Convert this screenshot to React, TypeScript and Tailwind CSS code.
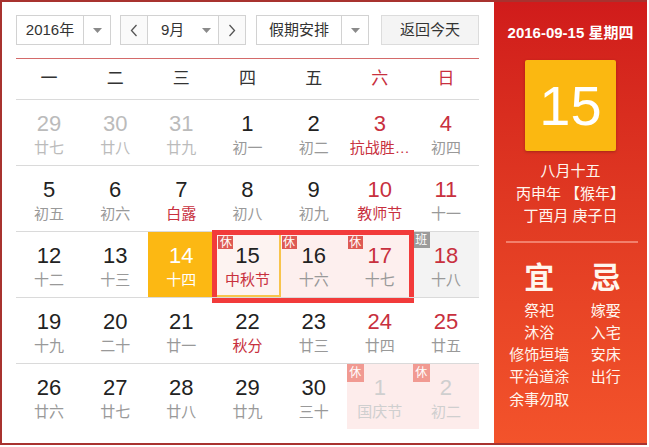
const FONT = { fontFamily: '"Liberation Sans", "Noto Sans CJK SC", sans-serif' };

type Day = {
  n: string;
  l: string;
  nc?: string;
  lc?: string;
  bg?: string;
  badge?: "休" | "班" | "休淡";
  today?: boolean;
};

const BLK = "text-[#222]";
const RED = "text-[#c8303e]";
const GRY = "text-[#999]";
const PALE = "text-[#bbb]";
const FADE = "text-[#cfcfcf]";

const weeks: Day[][] = [
  [
    { n: "29", l: "廿七", nc: PALE, lc: PALE },
    { n: "30", l: "廿八", nc: PALE, lc: PALE },
    { n: "31", l: "廿九", nc: PALE, lc: PALE },
    { n: "1", l: "初一" },
    { n: "2", l: "初二" },
    { n: "3", l: "抗战胜…", nc: RED, lc: RED },
    { n: "4", l: "初四", nc: RED },
  ],
  [
    { n: "5", l: "初五" },
    { n: "6", l: "初六" },
    { n: "7", l: "白露", lc: RED },
    { n: "8", l: "初八" },
    { n: "9", l: "初九" },
    { n: "10", l: "教师节", nc: RED, lc: RED },
    { n: "11", l: "十一", nc: RED },
  ],
  [
    { n: "12", l: "十二" },
    { n: "13", l: "十三" },
    { n: "14", l: "十四", nc: "text-white", lc: "text-white", bg: "bg-[#fcb813]" },
    { n: "15", l: "中秋节", lc: RED, bg: "bg-[#fdf3f1]", badge: "休", today: true },
    { n: "16", l: "十六", bg: "bg-[#fdefee]", badge: "休" },
    { n: "17", l: "十七", nc: RED, bg: "bg-[#fdefee]", badge: "休" },
    { n: "18", l: "十八", nc: RED, bg: "bg-[#f3f3f3]", badge: "班" },
  ],
  [
    { n: "19", l: "十九" },
    { n: "20", l: "二十" },
    { n: "21", l: "廿一" },
    { n: "22", l: "秋分", lc: RED },
    { n: "23", l: "廿三" },
    { n: "24", l: "廿四", nc: RED },
    { n: "25", l: "廿五", nc: RED },
  ],
  [
    { n: "26", l: "廿六" },
    { n: "27", l: "廿七" },
    { n: "28", l: "廿八" },
    { n: "29", l: "廿九" },
    { n: "30", l: "三十" },
    { n: "1", l: "国庆节", nc: FADE, lc: FADE, bg: "bg-[#fdeceb]", badge: "休淡" },
    { n: "2", l: "初二", nc: FADE, lc: FADE, bg: "bg-[#fdeceb]", badge: "休淡" },
  ],
];

function Caret() {
  return (
    <svg width="9" height="5" viewBox="0 0 9 5">
      <path d="M0 0 L9 0 L4.5 5 Z" fill="#8a8a8a" />
    </svg>
  );
}

function Chevron({ dir }: { dir: "l" | "r" }) {
  return (
    <svg width="8" height="13" viewBox="0 0 8 13">
      <polyline
        points={dir === "l" ? "6.5,1 1.5,6.5 6.5,12" : "1.5,1 6.5,6.5 1.5,12"}
        fill="none"
        stroke="#555"
        strokeWidth="1.3"
      />
    </svg>
  );
}

function Cell({ d }: { d: Day }) {
  const badgeCls =
    d.badge === "班"
      ? "bg-[#9b9b9b] left-0 top-0 w-[17px] h-[16px]"
      : d.badge === "休淡"
        ? "bg-[#f19a92] left-0 top-0 w-[17px] h-[18px]"
        : "bg-[#de5a54] top-[4px] h-[13px] w-[15px]";
  return (
    <div className={`relative flex flex-col items-center pt-[11px] ${d.bg ?? ""}`}>
      {d.today && <div className="absolute inset-0 border-2 border-[#f8c44c]" />}
      {d.badge && (
        <div
          className={`absolute flex items-center justify-center text-[12px] leading-none text-white ${badgeCls} ${
            d.badge === "休" ? (d.today ? "left-[4px]" : "left-[1px]") : ""
          }`}
        >
          {d.badge === "班" ? "班" : "休"}
        </div>
      )}
      <div className={`relative text-[22px] leading-[26px] ${d.nc ?? BLK}`}>{d.n}</div>
      <div className={`relative text-[15px] leading-[22px] whitespace-nowrap ${d.lc ?? GRY}`}>{d.l}</div>
    </div>
  );
}

export default function App() {
  return (
    <div style={FONT} className="w-[649px] h-[447px] bg-white">
      <div className="flex w-[647px] h-[445px] border-l-2 border-t-2 border-b-2 border-[#a8322f]">
        {/* left: month grid */}
        <div className="flex-1 bg-white pl-[14px] pr-[15px] pt-[13px]">
          <div className="flex h-[30px] text-[15px] text-[#333]">
            <div className="flex w-[95px] border border-[#d2d2d2]">
              <div className="flex w-[66px] items-center justify-center">2016年</div>
              <div className="flex flex-1 items-center justify-center border-l border-[#d2d2d2]">
                <Caret />
              </div>
            </div>
            <div className="ml-[9px] flex w-[126px] border border-[#d2d2d2]">
              <div className="flex w-[27px] items-center justify-center border-r border-[#d2d2d2] bg-[#fafafa]">
                <Chevron dir="l" />
              </div>
              <div className="flex flex-1 items-center pl-[13px]">
                <span>9月</span>
                <span className="ml-[18px] flex">
                  <Caret />
                </span>
              </div>
              <div className="flex w-[27px] items-center justify-center border-l border-[#d2d2d2] bg-[#fafafa]">
                <Chevron dir="r" />
              </div>
            </div>
            <div className="ml-[10px] flex w-[113px] border border-[#d2d2d2]">
              <div className="flex w-[84px] items-center justify-center">假期安排</div>
              <div className="flex flex-1 items-center justify-center border-l border-[#d2d2d2]">
                <Caret />
              </div>
            </div>
            <div className="ml-[12px] flex w-[98px] items-center justify-center border border-[#dcdcdc] bg-[#f4f4f4]">
              返回今天
            </div>
          </div>

          <div className="mt-[13px] h-px bg-[#d46a6a]" />
          <div className="grid h-[40px] grid-cols-7 items-center text-center text-[17px] text-[#333]">
            <div>一</div>
            <div>二</div>
            <div>三</div>
            <div>四</div>
            <div>五</div>
            <div className="text-[#c8303e]">六</div>
            <div className="text-[#c8303e]">日</div>
          </div>

          {weeks.map((w, i) => (
            <div key={i} className="relative grid h-[66px] grid-cols-7 border-t border-[#dadada]">
              {w.map((d, j) => (
                <Cell key={j} d={d} />
              ))}
              {i === 2 && (
                <div className="pointer-events-none absolute left-[196px] top-[-2px] h-[73px] w-[202px] border-[5px] border-[#f23b3b]" />
              )}
            </div>
          ))}
        </div>

        {/* right: today detail */}
        <div className="flex w-[154px] flex-col items-center bg-gradient-to-b from-[#d01b1b] to-[#f3532b] text-[#fff6ee]">
          <div className="mt-[20px] text-[15px] font-bold leading-[22px] text-white">2016-09-15 星期四</div>
          <div className="mt-[16px] flex h-[91px] w-[91px] items-center justify-center rounded-[2px] bg-[#fbb811] text-[56px] leading-none text-white shadow-[0_1px_3px_rgba(0,0,0,0.25)]">
            15
          </div>
          <div className="mt-[9px] text-[15px] leading-[22.5px]">八月十五</div>
          <div className="text-[15px] leading-[22.5px]">丙申年 【猴年】</div>
          <div className="text-[15px] leading-[22.5px]">丁酉月 庚子日</div>
          <div className="mt-[13px] ml-[2px] h-[2px] w-[132px] bg-[#f2806c]" />
          <div className="mt-[15px] grid w-full grid-cols-2 pl-[12px] pr-[8px] text-center">
            <div className="text-[30px] font-bold leading-[40px]">宜</div>
            <div className="text-[30px] font-bold leading-[40px]">忌</div>
            <div className="mt-[2px] text-[15px] leading-[22.3px]">
              <div>祭祀</div>
              <div>沐浴</div>
              <div>修饰垣墙</div>
              <div>平治道涂</div>
              <div>余事勿取</div>
            </div>
            <div className="mt-[2px] text-[15px] leading-[22.3px]">
              <div>嫁娶</div>
              <div>入宅</div>
              <div>安床</div>
              <div>出行</div>
            </div>
          </div>
        </div>
      </div>
    </div>
  );
}
